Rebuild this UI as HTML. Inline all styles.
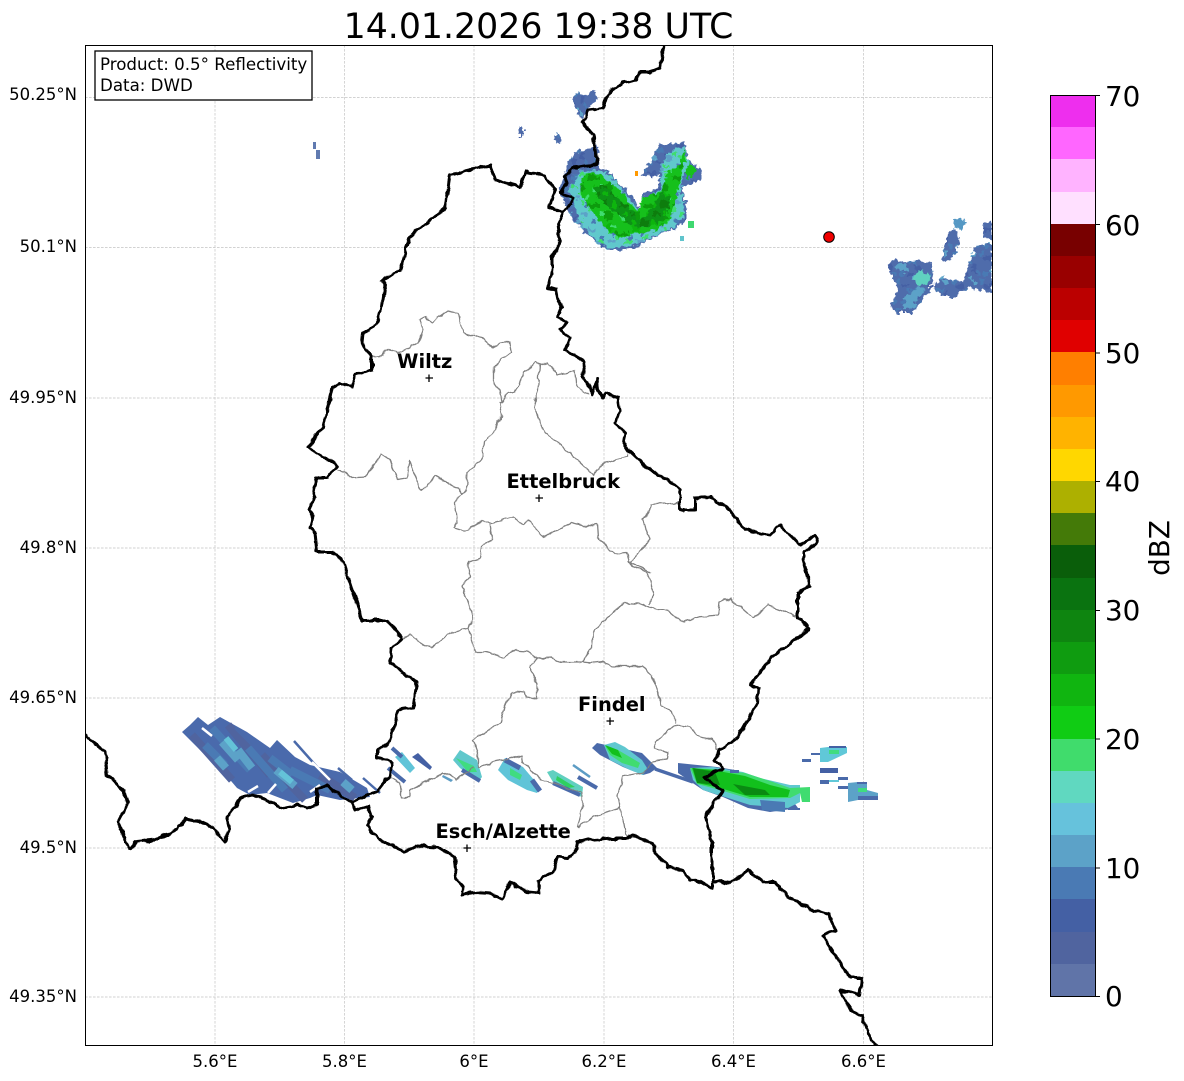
<!DOCTYPE html>
<html><head><meta charset="utf-8"><style>
html,body{margin:0;padding:0;background:#fff;width:1184px;height:1081px;overflow:hidden}
svg{display:block}
text{font-family:"DejaVu Sans",sans-serif;fill:#000}
.b{fill:none;stroke:#000;stroke-width:3;stroke-linejoin:round;stroke-linecap:round}
.g{fill:none;stroke:#808080;stroke-width:1.3;stroke-linejoin:round}
.t{font-size:16.5px}
.l{font-size:19.44px;font-weight:bold}
.c{font-size:27.78px}
</style></head><body>
<svg width="1184" height="1081" viewBox="0 0 1184 1081" xmlns="http://www.w3.org/2000/svg">
<defs>
<clipPath id="ax"><rect x="85" y="45" width="907" height="1001"/></clipPath>
<filter id="rag" x="-10%" y="-10%" width="120%" height="120%"><feTurbulence type="fractalNoise" baseFrequency="0.22" numOctaves="2" seed="4"/><feDisplacementMap in="SourceGraphic" scale="8" xChannelSelector="R" yChannelSelector="G"/></filter>
<filter id="wig" filterUnits="userSpaceOnUse" x="0" y="0" width="1184" height="1081"><feTurbulence type="fractalNoise" baseFrequency="0.11" numOctaves="2" seed="9"/><feDisplacementMap in="SourceGraphic" scale="5" xChannelSelector="R" yChannelSelector="G"/></filter>
<pattern id="pb" patternUnits="userSpaceOnUse" width="28" height="28"><rect width="28" height="28" fill="#4f6cab"/><path fill="#4a7ab4" d="M0 0h4v4H0zM12 8h8v4h-8zM24 20h4v4h-4zM4 20h4v4H4z"/><path fill="#5ca2c8" d="M20 0h4v4h-4zM8 16h4v4H8zM16 24h4v4h-4z"/><path fill="#4460a4" d="M4 4h8v4H4zM20 12h4v8h-4zM12 20h4v4h-4z"/></pattern>
<pattern id="pt" patternUnits="userSpaceOnUse" width="28" height="28"><rect width="28" height="28" fill="#60c8cc"/><path fill="#5ca2c8" d="M0 4h8v4H0zM16 0h4v4h-4zM20 16h8v4h-8z"/><path fill="#4a7ab4" d="M12 12h4v4h-4zM4 24h4v4H4zM24 8h4v4h-4z"/><path fill="#40dc70" d="M8 16h8v4H8zM20 4h4v4h-4zM0 12h4v4H0zM20 24h4v4h-4z"/></pattern>
<pattern id="pg" patternUnits="userSpaceOnUse" width="28" height="28"><rect width="28" height="28" fill="#12c01c"/><path fill="#0f9c10" d="M0 8h12v4H0zM16 16h8v8h-8zM8 24h4v4H8z"/><path fill="#40dc70" d="M24 0h4v4h-4zM12 16h4v4h-4zM4 20h4v4H4z"/><path fill="#10b510" d="M16 0h8v8h-8z"/></pattern>
<pattern id="pd" patternUnits="userSpaceOnUse" width="20" height="20"><rect width="20" height="20" fill="#0e9212"/><path fill="#0a7d10" d="M0 0h8v8H0zM12 12h8v4h-8z"/><path fill="#10b510" d="M12 0h4v8h-4zM4 12h4v4H4z"/></pattern>
</defs>
<rect width="1184" height="1081" fill="#fff"/>
<text x="538.5" y="38" font-size="34.72" text-anchor="middle">14.01.2026 19:38 UTC</text>
<g clip-path="url(#ax)">
<g stroke="#c4c4c4" stroke-width="0.7" stroke-dasharray="2.6 1.4" fill="none">
<path d="M215 45V1046M344.500 45V1046M474 45V1046M604 45V1046M733.500 45V1046M863.500 45V1046"/>
<path d="M85 97.500H992M85 247.500H992M85 398H992M85 548H992M85 698H992M85 848H992M85 997H992"/>
</g>
<!-- north storm -->
<g filter="url(#rag)">
<path fill="url(#pb)" d="M560 190 566 165 575 152 590 148 598 145 599 168 610 172 620 185 632 195 637 205 641 210 643 195 658 188 659 176 640 175 652 160 658 145 685 142 687 160 700 168 700 180 682 188 686 205 687 218 676 228 658 235 640 245 625 250 607 250 590 237 575 222 565 205Z"/>
<path fill="url(#pt)" d="M568 190 580 172 598 170 612 176 622 190 634 204 641 212 645 198 660 190 660 172 668 152 684 145 688 165 680 185 684 205 684 218 672 228 655 235 640 243 625 247 607 247 590 235 578 218Z"/>
<path fill="url(#pg)" d="M582 175 598 173 620 190 637 212 643 197 660 192 668 172 680 165 684 148 686 160 680 180 676 195 673 208 670 220 657 230 640 233 620 238 607 230 593 213 580 193Z"/>
<path fill="url(#pd)" d="M592 186 606 186 626 205 640 222 652 207 662 192 670 196 667 216 650 227 635 228 618 214 602 202Z"/>
<path fill="#12c01c" d="M688 162 697 170 688 180 685 172Z"/>
</g>
<path fill="#3fd870" d="M688 221h6v7h-6z"/>
<path fill="#60c4cc" d="M680 236h4v5h-4z"/>
<path fill="#ff9900" d="M635 171h3v5h-3z"/>
<g fill="url(#pb)" filter="url(#rag)">
<path d="M572 100 577 93 587 95 595 90 597 100 587 110 583 120 577 113Z"/>
<path d="M554 135 561 135 560 143 556 143Z"/>
<path d="M519 127h5v9h-5z"/>
</g>
<path fill="#607ab0" d="M313 142h3v7h-3zM316 150h4v9h-4z"/>
<!-- east -->
<g filter="url(#rag)">
<path fill="url(#pb)" d="M887 265 895 259 907 262 920 260 932 263 934 283 925 297 913 313 896 313 890 305 898 290 892 278Z"/>
<path fill="url(#pb)" d="M932 287 942 277 953 280 963 282 970 260 977 245 992 243 992 293 977 290 970 287 953 297 945 297 937 293Z"/>
<path fill="url(#pb)" d="M985 223 992 220 992 240 983 237Z"/>
<path fill="url(#pb)" d="M948 232 955 228 960 243 953 258 945 262 942 255Z"/>
<path fill="#5498c4" d="M953 220 962 218 966 224 960 229 955 228Z"/>
<path fill="#5ca2c8" d="M893 266 902 262 907 268 900 272ZM906 297 920 285 924 290 912 307 902 310Z"/>
<path fill="#60d0c0" d="M913 278 920 270 930 275 928 283 917 285Z"/>
</g>
<!-- SW band -->
<path fill="#4a6aac" d="M182 732 190 725 198 717 208 725 220 717 247 732 270 748 277 740 295 757 310 765 340 772 367 788 370 797 340 800 317 795 310 798 293 803 267 793 250 795 237 788 220 768 203 753Z"/>
<g fill="none" stroke-width="8">
<path stroke="#50649f" d="M192 735 232 780M228 725 270 775M262 755 305 800M320 775 355 798"/>
<path stroke="#4a7ab4" d="M212 728 250 770M248 748 285 790M290 770 330 790M205 745 225 765M270 758 292 775"/>
<path stroke="#5ca2c8" d="M222 742 238 760M217 758 226 768M276 770 295 786M343 782 352 790M238 750 252 768"/>
<path stroke="#64c2d8" stroke-width="6" d="M226 738 236 750M280 772 292 782"/>
</g>
<path fill="none" stroke="#4a6aaa" stroke-width="2.500" d="M235 728 252 745M294 741 318 768M338 768 352 780M363 778 380 793"/>
<path fill="none" stroke="#fff" stroke-width="2.500" d="M202 728 212 736M248 792 258 786M268 793 276 784M310 792 320 785M312 762 330 780"/>
<!-- S bands left -->
<path fill="#60c4d8" d="M395 757 402 752 415 768 410 773Z"/>
<path fill="none" stroke="#4a6aaa" stroke-width="4" d="M392 748 402 757M388 768 405 782"/>
<path fill="#4460a4" d="M412 757 418 753 432 767 430 770Z"/>
<path fill="#5c9cc4" d="M443 775l10 5 -2 2 -9 -5z"/>
<path fill="#60c8cc" d="M453 760 460 750 477 760 482 777 478 782 460 768Z"/>
<path fill="#40dc80" d="M456 758 474 766 477 772 468 772Z"/>
<path fill="none" stroke="#4a6aaa" stroke-width="4" d="M462 770 480 781"/>
<path fill="#60c4d8" d="M498 770 505 758 523 767 540 787 537 793 527 790 508 780Z"/>
<path fill="#40dc80" d="M510 768 522 775 520 780 510 775Z"/>
<path fill="none" stroke="#4a6aaa" stroke-width="5" d="M505 760 520 768M532 780 540 791"/>
<path fill="#60d0c0" d="M547 772 553 770 583 787 582 797 572 793 553 782Z"/>
<path fill="#2fd060" d="M557 776 575 787 568 788 556 780Z"/>
<path fill="none" stroke="#4a6aaa" stroke-width="4" d="M578 777 597 788M553 783 580 795"/>
<path fill="none" stroke="#5c9cc4" stroke-width="2.500" d="M573 765 590 777"/>
<!-- S band mid -->
<path fill="#4a6aaa" d="M592 748 597 743 642 753 657 768 650 773 643 775 623 767 600 755Z"/>
<path fill="#60c8d0" d="M604 745 615 742 625 747 642 760 647 768 643 775 630 770 610 760Z"/>
<path fill="#40dc70" d="M605 746 618 750 640 763 638 768 622 763 610 755Z"/>
<path fill="#12c01c" d="M605 745 618 750 622 758 612 754Z"/>
<path fill="none" stroke="#4a6aaa" stroke-width="3.500" d="M655 769 693 782"/>
<path fill="#4a6aaa" d="M678 763 717 767 735 770 790 797 798 808 770 812 748 808 723 797 703 790 678 773Z"/>
<path fill="#60c8d0" d="M690 768 713 767 743 772 760 778 790 785 800 785 800 802 788 808 750 805 703 790 693 780Z"/>
<path fill="#40dc70" d="M690 768 713 769 745 773 770 781 790 788 810 787 810 802 802 802 800 793 790 798 750 799 720 790 697 784Z"/>
<path fill="#12c01c" d="M692 768 713 770 745 776 770 785 790 790 788 797 750 797 720 788 697 783Z"/>
<path fill="#0a8a12" d="M693 768 715 772 720 785 697 783ZM733 784 765 790 770 795 745 795Z"/>
<path fill="#4a7ab4" d="M760 800 785 802 785 812 762 810Z"/>
<path fill="#4a6aaa" d="M730 770h9v3h-9zM788 808h12v2h-12z"/>
<!-- right cells -->
<path fill="#60c8d8" d="M820 748 828 747 847 747 847 753 828 762 820 762Z"/>
<path fill="#40dc80" d="M829 750h10v4h-10z"/>
<path fill="#4460a4" d="M829 746h17v2h-17zM820 768h18v5h-18z"/>
<path fill="#4a6aaa" d="M811 753h9v2h-9zM802 759h9v3h-9zM820 780h9v4h-9zM838 777h10v3h-10z"/>
<path fill="#60c8d8" d="M829 780h10v2h-10z"/>
<path fill="#5ca2c8" d="M848 783 858 782 867 782 867 790 878 793 878 800 858 800 848 802Z"/>
<path fill="#40dc80" d="M858 788h9v4h-9z"/>
<path fill="#4a6aaa" d="M838 786h10v3h-10zM857 782h10v2h-10zM858 796h20v4h-20z"/>
<!-- grey borders -->
<g class="g" filter="url(#wig)">
<path d="M372 357 382 355 388 350 397 353 418 343 423 330 420 320 425 317 432 322 448 311 457 313 463 333 482 338 492 347 500 343 510 343 512 352 503 359 493 367 493 380 500 390 502 402 500 403 502 415 492 433 485 442 483 457 468 472 467 490 455 502 457 523 454 528 463 531 483 521 492 523 513 517 523 524 528 520 543 537 557 530 572 523 587 527 597 523 598 538 615 554 627 553 630 563 650 572"/>
<path d="M337 470 345 472 352 478 365 477 381 454 390 460 398 479 407 477 410 461 413 470 420 489 428 487 435 476 448 483 457 487 463 495"/>
<path d="M502 402 507 393 515 392 525 372 535 361 540 365 538 390 534 408 545 433 567 450 593 475 603 463 628 457 628 453"/>
<path d="M540 365 548 363 558 375 575 370 577 387 588 394"/>
<path d="M490 523 492 538 482 547 480 558 468 562 470 578 462 585 473 617 469 628 475 652 487 652 503 657 515 650 527 651 537 658 550 657 562 662 583 662 593 663 603 662 612 666 643 666 652 675 658 693 662 705 675 715 675 723"/>
<path d="M469 628 452 632 430 648 410 635 402 638"/>
<path d="M537 658 530 667 537 685 537 699 527 697 525 692 513 691 505 707 500 723 473 740 478 753 478 767 500 761 522 755 523 763 528 767 540 780 550 782 582 793 582 808 577 828 593 817 620 808 627 837"/>
<path d="M620 808 618 795 622 777 643 773 652 762 667 760 668 753 655 748 655 742 675 725 690 727 700 737 713 740 718 750"/>
<path d="M473 767 457 780 443 773 410 790 410 797 402 798 400 783 390 777"/>
<path d="M583 662 592 648 593 632 607 618 625 602 640 603 650 607 670 612 683 623 697 617 718 615 720 603 730 598 753 618 768 605 798 617"/>
<path d="M650 605 653 592 647 572 632 567 628 560"/>
<path d="M630 563 650 540 643 520 650 508 650 505 678 503 683 512"/>
</g>
<!-- black borders -->
<g class="b" filter="url(#wig)">
<path d="M665 45 662 55 660 68 650 72 640 72 636 80 623 83 608 93 603 108 588 110 585 118 582 123 593 135 595 148 598 158 597 165 573 168 565 177 567 184 560 193 573 197 572 205 563 212 558 223 560 243 552 257 552 270 548 288 556 290 558 300 562 307 558 317 568 323 560 330 570 338 565 350 585 362 582 377 590 385 592 395 597 378 598 390 602 398 605 393 618 398 620 410 615 423 625 433 623 442 628 450 650 470 668 480 680 490 680 510 695 510 695 498 710 497 730 510 745 530 770 535 780 525 800 545 815 535 818 542 803 552 803 560 810 585 798 593 798 618 808 625 802 622 808 628 802 635 772 657 750 685 758 688 757 703 738 737 720 750 715 760 722 768 705 777 722 790 705 817 712 843 712 888"/>
<path d="M712 880 730 883 748 870 763 882 775 882 788 897 813 910 830 915 835 930 822 935 835 955 850 978 862 978 860 995 840 990 850 1010 862 1015 870 1040 880 1048"/>
<path d="M712 888 702 882 690 880 682 870 667 867 665 862 655 853 653 843 632 835 627 838 613 838 588 840 577 843 575 853 568 858 557 857 553 872 538 880 540 893 527 892 510 882 502 899 490 893 475 892 462 895 463 888 457 880 454 857 438 847 417 846 405 851 380 840 370 830 367 825 372 817 368 806 355 810 352 803 362 798 377 792 390 775 392 762 378 757 378 750 390 742 398 710 413 708 417 682 390 663 392 648 402 638 387 620 362 620 342 558 332 552 317 552 315 533 310 528 313 517 309 510 314 497 313 493 317 478 328 478 333 470 337 465 308 448 315 437 323 427 332 388 340 383 352 387 355 375 372 370 372 357 362 343 363 333 377 325 383 300 385 285 382 280 400 270 410 237 445 208 450 175 490 165 495 180 520 187 525 172 545 175 555 190 550 208 563 212"/>
<path d="M85 735 105 752 107 775 124 790 128 803 118 822 130 850 137 842 155 840 177 830 185 819 200 822 213 828 224 842 230 830 227 817 235 807 240 798 253 795 267 800 280 808 298 805 307 808 317 805 317 788 327 785 340 795 352 803"/>
</g>
<!-- markers -->
<g stroke="#000" stroke-width="1.300" fill="none">
<path d="M425.500 378H433M429 374.500V382M535.500 498H543M539 494.500V502M606.500 721H614M610 717.500V725M463.500 848H471M467 844.500V852"/>
</g>
<circle cx="829" cy="237" r="5.300" fill="#f00000" stroke="#000" stroke-width="1"/>
<text class="l" x="397" y="368">Wiltz</text>
<text class="l" x="506.500" y="488">Ettelbruck</text>
<text class="l" x="578" y="711">Findel</text>
<text class="l" x="435.500" y="838">Esch/Alzette</text>
<rect x="95" y="51" width="217" height="49" fill="#fff" stroke="#000" stroke-width="1.300"/>
<text class="t" x="100" y="70" style="font-size:16.67px">Product: 0.5° Reflectivity</text>
<text class="t" x="100" y="91" style="font-size:16.67px">Data: DWD</text>
</g>
<rect x="85.500" y="45.500" width="907" height="1000" fill="none" stroke="#000" stroke-width="1"/>
<!-- axis labels -->
<g class="t" text-anchor="end">
<text class="t" x="77" y="100">50.25°N</text>
<text class="t" x="77" y="252">50.1°N</text>
<text class="t" x="77" y="403">49.95°N</text>
<text class="t" x="77" y="553">49.8°N</text>
<text class="t" x="77" y="703">49.65°N</text>
<text class="t" x="77" y="853">49.5°N</text>
<text class="t" x="77" y="1002">49.35°N</text>
</g>
<g text-anchor="middle">
<text class="t" x="215" y="1067">5.6°E</text>
<text class="t" x="344.500" y="1067">5.8°E</text>
<text class="t" x="474" y="1067">6°E</text>
<text class="t" x="604" y="1067">6.2°E</text>
<text class="t" x="733.500" y="1067">6.4°E</text>
<text class="t" x="863.500" y="1067">6.6°E</text>
</g>
<!-- colorbar -->
<g shape-rendering="crispEdges">
<rect x="1051" y="95" width="44" height="33" fill="#ee2eee"/>
<rect x="1051" y="127" width="44" height="33" fill="#ff66ff"/>
<rect x="1051" y="159" width="44" height="33" fill="#ffb3ff"/>
<rect x="1051" y="192" width="44" height="33" fill="#ffe0ff"/>
<rect x="1051" y="224" width="44" height="33" fill="#780000"/>
<rect x="1051" y="256" width="44" height="33" fill="#990000"/>
<rect x="1051" y="288" width="44" height="33" fill="#bb0000"/>
<rect x="1051" y="320" width="44" height="33" fill="#e00000"/>
<rect x="1051" y="352" width="44" height="33" fill="#ff7f00"/>
<rect x="1051" y="385" width="44" height="33" fill="#ff9900"/>
<rect x="1051" y="417" width="44" height="33" fill="#ffb300"/>
<rect x="1051" y="449" width="44" height="33" fill="#ffd700"/>
<rect x="1051" y="481" width="44" height="33" fill="#adb000"/>
<rect x="1051" y="513" width="44" height="33" fill="#447a08"/>
<rect x="1051" y="545" width="44" height="33" fill="#0a5e0a"/>
<rect x="1051" y="578" width="44" height="33" fill="#0a7310"/>
<rect x="1051" y="610" width="44" height="33" fill="#0e8510"/>
<rect x="1051" y="642" width="44" height="33" fill="#0f9c10"/>
<rect x="1051" y="674" width="44" height="33" fill="#10b510"/>
<rect x="1051" y="706" width="44" height="33" fill="#10cc14"/>
<rect x="1051" y="739" width="44" height="33" fill="#40dc6c"/>
<rect x="1051" y="771" width="44" height="33" fill="#60d8c0"/>
<rect x="1051" y="803" width="44" height="33" fill="#66c2dc"/>
<rect x="1051" y="835" width="44" height="33" fill="#5ca2c8"/>
<rect x="1051" y="867" width="44" height="33" fill="#4a7ab4"/>
<rect x="1051" y="899" width="44" height="33" fill="#4460a4"/>
<rect x="1051" y="932" width="44" height="33" fill="#50649f"/>
<rect x="1051" y="964" width="44" height="32" fill="#6074a8"/>
</g>
<rect x="1050.500" y="95.500" width="45" height="901" fill="none" stroke="#000" stroke-width="1"/>
<path stroke="#000" stroke-width="1" d="M1095 95.500h5M1095 224.500h5M1095 353h5M1095 481.500h5M1095 610.500h5M1095 739h5M1095 868h5M1095 996.500h5"/>
<g class="c">
<text class="c" x="1105" y="106">70</text>
<text class="c" x="1105" y="235">60</text>
<text class="c" x="1105" y="363">50</text>
<text class="c" x="1105" y="491">40</text>
<text class="c" x="1105" y="620">30</text>
<text class="c" x="1105" y="749">20</text>
<text class="c" x="1105" y="878">10</text>
<text class="c" x="1105" y="1006">0</text>
</g>
<text class="c" transform="translate(1169 548) rotate(-90)" text-anchor="middle">dBZ</text>
</svg>
</body></html>
